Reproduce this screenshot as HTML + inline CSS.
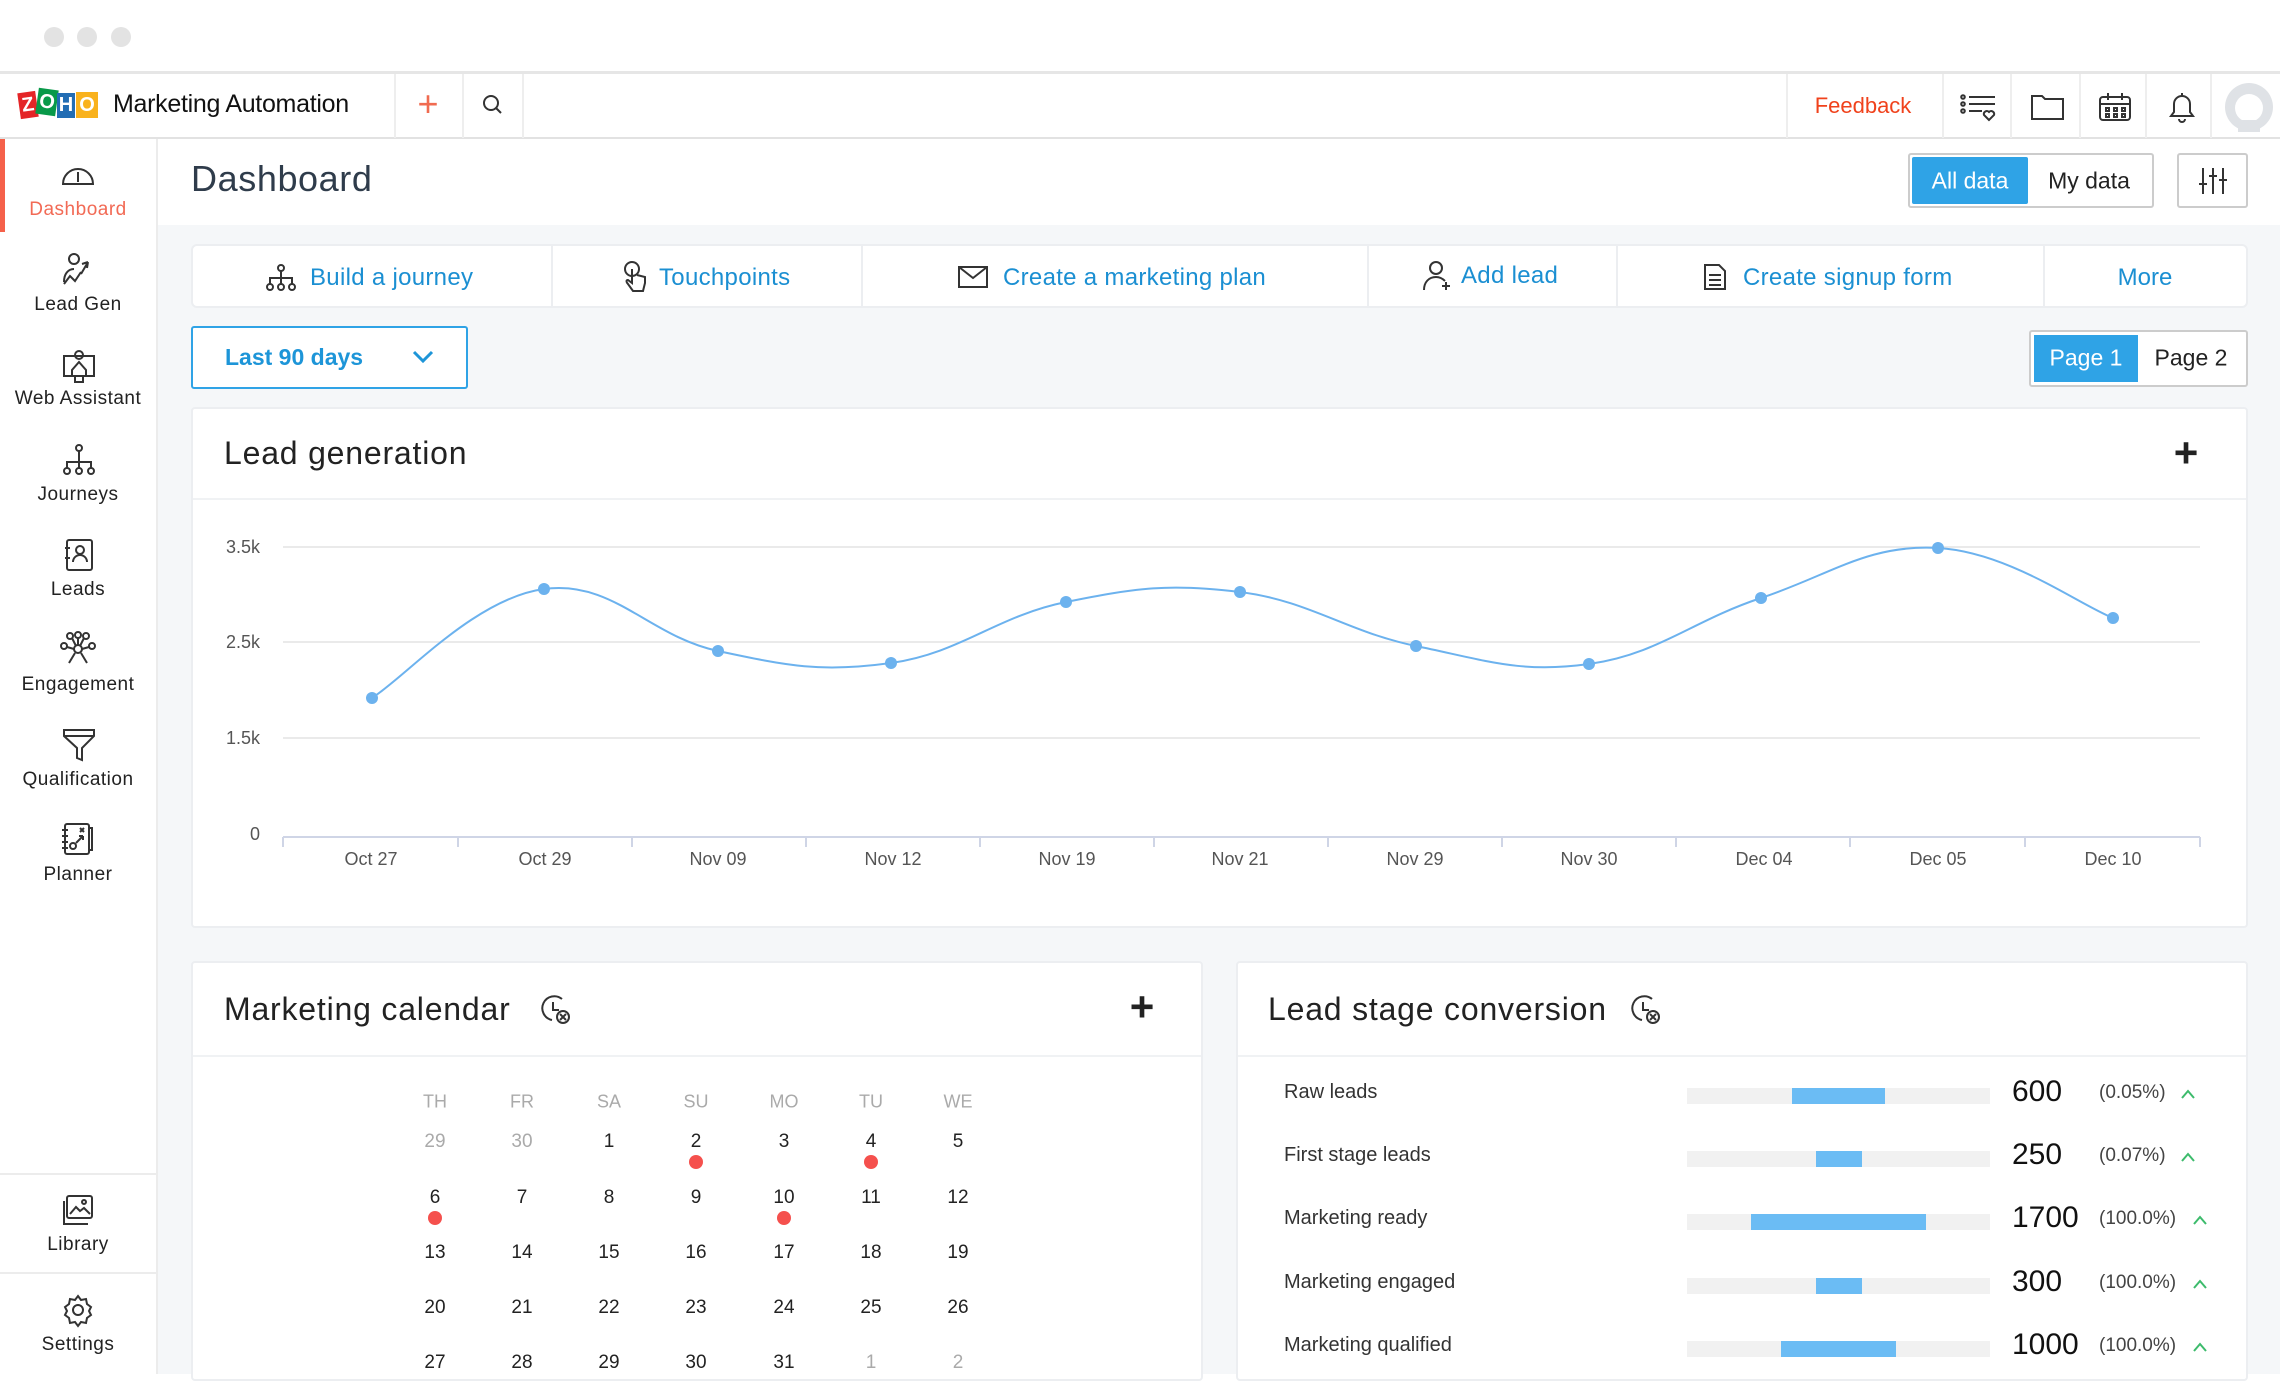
<!DOCTYPE html>
<html><head><meta charset="utf-8"><style>
*{box-sizing:border-box;margin:0;padding:0}
body{width:2280px;height:1374px;overflow:hidden;background:#fff;font-family:"Liberation Sans",sans-serif;position:relative;color:#222}
.a{position:absolute}
.c{position:absolute;transform:translate(-50%,-50%);white-space:nowrap}
.sb{font-size:19px;color:#222;letter-spacing:.5px;font-weight:500}
.blue{color:#1b8fd2}
svg{position:absolute;overflow:visible}
.ic{fill:none;stroke:#333;stroke-width:2}
.ttl{font-size:32px;color:#222;letter-spacing:.8px}
</style></head><body>
<!-- window chrome -->
<div class="a" style="left:0;top:0;width:2280px;height:74px;background:#fff;border-bottom:3px solid #e6e6e6"></div>
<div class="a" style="left:44px;top:27px;width:20px;height:20px;border-radius:50%;background:#e3e3e3"></div>
<div class="a" style="left:77px;top:27px;width:20px;height:20px;border-radius:50%;background:#e3e3e3"></div>
<div class="a" style="left:111px;top:27px;width:20px;height:20px;border-radius:50%;background:#e3e3e3"></div>
<!-- header -->
<div class="a" style="left:0;top:74px;width:2280px;height:65px;background:#fff;border-bottom:2px solid #e2e2e2"></div>
<div class="a" style="left:19px;top:92px;width:18px;height:26px;background:#e42527;transform:rotate(-8deg);color:#fff;font-weight:bold;font-size:20px;text-align:center;line-height:26px">Z</div>
<div class="a" style="left:37px;top:89px;width:20px;height:26px;background:#089949;transform:rotate(8deg);color:#fff;font-weight:bold;font-size:20px;text-align:center;line-height:26px">O</div>
<div class="a" style="left:57px;top:93px;width:18px;height:25px;background:#226db4;color:#fff;font-weight:bold;font-size:20px;text-align:center;line-height:25px">H</div>
<div class="a" style="left:76px;top:92px;width:22px;height:26px;background:#f9b21d;color:#fff;font-weight:bold;font-size:20px;text-align:center;line-height:26px">O</div>
<div class="a" style="left:113px;top:90px;font-size:25px;color:#111;letter-spacing:-.3px">Marketing Automation</div>
<div class="a" style="left:394px;top:74px;width:2px;height:64px;background:#eee"></div>
<div class="a" style="left:462px;top:74px;width:2px;height:64px;background:#eee"></div>
<div class="a" style="left:522px;top:74px;width:2px;height:64px;background:#eee"></div>
<div class="c" style="left:428px;top:104px;font-size:36px;color:#f06b50;font-weight:300">+</div>
<svg style="left:482px;top:94px" width="24" height="24"><circle cx="9" cy="9" r="7" class="ic"/><line x1="14" y1="14" x2="19" y2="19" class="ic"/></svg>
<div class="a" style="left:1786px;top:74px;width:2px;height:64px;background:#eee"></div>
<div class="c" style="left:1863px;top:106px;font-size:22px;color:#f0421c">Feedback</div>
<div class="a" style="left:1942px;top:74px;width:2px;height:64px;background:#eee"></div>
<div class="a" style="left:2010px;top:74px;width:2px;height:64px;background:#eee"></div>
<div class="a" style="left:2079px;top:74px;width:2px;height:64px;background:#eee"></div>
<div class="a" style="left:2145px;top:74px;width:2px;height:64px;background:#eee"></div>
<div class="a" style="left:2210px;top:74px;width:2px;height:64px;background:#eee"></div>
<svg style="left:1960px;top:94px" width="38" height="28"><g class="ic" stroke-width="1.6"><circle cx="3" cy="3" r="1.8"/><circle cx="3" cy="10" r="1.8"/><circle cx="3" cy="17" r="1.8"/><line x1="9" y1="3" x2="35" y2="3"/><line x1="9" y1="10" x2="35" y2="10"/><line x1="9" y1="17" x2="22" y2="17"/><path d="M29 26l-5-5a3 3 0 0 1 5-3a3 3 0 0 1 5 3z"/></g></svg>
<svg style="left:2030px;top:92px" width="36" height="30"><path class="ic" d="M2 4h10l3 3h18v20H2z"/></svg>
<svg style="left:2098px;top:92px" width="34" height="30"><g class="ic"><rect x="2" y="5" width="30" height="23" rx="3"/><line x1="2" y1="12" x2="32" y2="12"/><line x1="10" y1="1" x2="10" y2="8"/><line x1="24" y1="1" x2="24" y2="8"/><rect x="8" y="16" width="3" height="3"/><rect x="16" y="16" width="3" height="3"/><rect x="24" y="16" width="3" height="3"/><rect x="16" y="22" width="3" height="3"/><rect x="24" y="22" width="3" height="3"/><rect x="8" y="22" width="3" height="3"/></g></svg>
<svg style="left:2167px;top:90px" width="30" height="34"><path class="ic" d="M4 26h22l-3-4V14a8 8 0 0 0-16 0v8zM12 29a3 3 0 0 0 6 0M15 3v3"/></svg>
<svg style="left:2224px;top:82px" width="50" height="50"><circle cx="25" cy="25" r="24" fill="#dfe2e6"/><circle cx="25" cy="26" r="14" fill="#fff"/><rect x="14" y="38" width="22" height="12" fill="#dfe2e6"/></svg>
<!-- sidebar -->
<div class="a" style="left:0;top:139px;width:158px;height:1235px;background:#fff;border-right:2px solid #ececec"></div>
<div class="a" style="left:0;top:139px;width:5px;height:93px;background:#f5614a"></div>
<svg style="left:60px;top:162px" width="36" height="24"><g class="ic" stroke="#f26a55"><path d="M3 22a15 15 0 0 1 30 0z"/><line x1="18" y1="10" x2="18" y2="20"/></g></svg>
<div class="c sb" style="left:78px;top:210px;color:#f26a55">Dashboard</div>
<svg style="left:60px;top:252px" width="36" height="36"><g class="ic" stroke-width="1.8"><circle cx="14" cy="7" r="5"/><path d="M4 30c0-8 4-13 10-13M4 32l6-8 5 5 6-9M28 10l-6 2m6-2l-1 6M28 10l-7 12"/></g></svg>
<div class="c sb" style="left:78px;top:305px">Lead Gen</div>
<svg style="left:62px;top:348px" width="34" height="36"><g class="ic" stroke-width="1.8"><rect x="2" y="8" width="30" height="20"/><circle cx="17" cy="7" r="4"/><path d="M10 28v-6l7-8 7 8v6M13 28v6h8v-6"/></g></svg>
<div class="c sb" style="left:78px;top:399px">Web Assistant</div>
<svg style="left:62px;top:444px" width="34" height="32"><g class="ic" stroke-width="1.8"><circle cx="17" cy="4" r="3"/><line x1="17" y1="7" x2="17" y2="24"/><path d="M5 24v-6h24v6"/><circle cx="5" cy="27" r="3"/><circle cx="17" cy="27" r="3"/><circle cx="29" cy="27" r="3"/></g></svg>
<div class="c sb" style="left:78px;top:495px">Journeys</div>
<svg style="left:64px;top:538px" width="30" height="34"><g class="ic" stroke-width="1.8"><rect x="3" y="2" width="25" height="30" rx="2"/><circle cx="16" cy="12" r="4"/><path d="M9 24a7 7 0 0 1 14 0M1 10h5M1 20h5"/></g></svg>
<div class="c sb" style="left:78px;top:590px">Leads</div>
<svg style="left:60px;top:632px" width="36" height="34"><g class="ic" stroke-width="1.8"><circle cx="18" cy="17" r="4"/><circle cx="10" cy="4" r="3"/><circle cx="26" cy="4" r="3"/><circle cx="18" cy="3" r="3"/><circle cx="4" cy="14" r="3"/><circle cx="32" cy="14" r="3"/><path d="M12 6l4 8M24 6l-4 8M18 6v7M7 15l7 2M29 15l-7 2M15 21l-6 10M21 21l6 10"/></g></svg>
<div class="c sb" style="left:78px;top:685px">Engagement</div>
<svg style="left:62px;top:728px" width="34" height="34"><g class="ic" stroke-width="1.8"><path d="M2 2h30v6L20 20v12l-5-2V20L2 8z"/><line x1="2" y1="8" x2="32" y2="8"/></g></svg>
<div class="c sb" style="left:78px;top:780px">Qualification</div>
<svg style="left:62px;top:822px" width="32" height="36"><g class="ic" stroke-width="1.8"><rect x="3" y="2" width="24" height="30" rx="2"/><path d="M0 8h6M0 14h6M0 20h6M0 26h6M27 6h3v22h-3"/><circle cx="11" cy="24" r="3"/><path d="M14 21l7-7m0 0h-4m4 0v4M18 6l4 4m0-4l-4 4"/></g></svg>
<div class="c sb" style="left:78px;top:875px">Planner</div>
<div class="a" style="left:0;top:1173px;width:157px;height:2px;background:#ececec"></div>
<svg style="left:62px;top:1194px" width="32" height="32"><g class="ic" stroke-width="1.8"><rect x="5" y="2" width="25" height="22" rx="2"/><path d="M2 7v23h24"/><path d="M8 20l6-7 4 4 4-3 6 6"/><circle cx="22" cy="8" r="2"/></g></svg>
<div class="c sb" style="left:78px;top:1245px">Library</div>
<div class="a" style="left:0;top:1272px;width:157px;height:2px;background:#ececec"></div>
<svg style="left:62px;top:1294px" width="32" height="32"><g class="ic" stroke-width="1.8"><circle cx="16" cy="16" r="5"/><path d="M16 2l3 4 5-1 1 5 4 3-2 4 2 4-4 3-1 5-5-1-3 4-3-4-5 1-1-5-4-3 2-4-2-4 4-3 1-5 5 1z"/></g></svg>
<div class="c sb" style="left:78px;top:1345px">Settings</div>
<!-- main -->
<div class="a" style="left:158px;top:225px;width:2122px;height:1149px;background:#f5f7f9"></div>
<div class="a" style="left:191px;top:158px;font-size:36px;color:#2f3c4b;letter-spacing:.6px">Dashboard</div>
<div class="a" style="left:1908px;top:153px;width:246px;height:55px;border:2px solid #ccc;border-radius:3px;background:#fff"></div>
<div class="a" style="left:1912px;top:157px;width:116px;height:47px;background:#2fa3e6;border-radius:2px"></div>
<div class="c" style="left:1970px;top:181px;font-size:23px;color:#fff">All data</div>
<div class="c" style="left:2089px;top:181px;font-size:23px;color:#222">My data</div>
<div class="a" style="left:2177px;top:153px;width:71px;height:55px;border:2px solid #ccc;border-radius:3px;background:#fff"></div>
<svg style="left:2199px;top:166px" width="28" height="30"><g class="ic" stroke-width="2"><line x1="4" y1="2" x2="4" y2="28"/><line x1="14" y1="2" x2="14" y2="28"/><line x1="24" y1="2" x2="24" y2="28"/><line x1="0" y1="18" x2="8" y2="18"/><line x1="10" y1="10" x2="18" y2="10"/><line x1="20" y1="14" x2="28" y2="14"/></g></svg>
<!-- quick actions -->
<div class="a" style="left:191px;top:244px;width:2057px;height:64px;background:#fff;border:2px solid #eceef1;border-radius:6px"></div>
<div class="a" style="left:551px;top:245px;width:2px;height:62px;background:#eceef1"></div>
<div class="a" style="left:861px;top:245px;width:2px;height:62px;background:#eceef1"></div>
<div class="a" style="left:1367px;top:245px;width:2px;height:62px;background:#eceef1"></div>
<div class="a" style="left:1616px;top:245px;width:2px;height:62px;background:#eceef1"></div>
<div class="a" style="left:2043px;top:245px;width:2px;height:62px;background:#eceef1"></div>
<svg style="left:266px;top:264px" width="30" height="28"><g class="ic" stroke-width="1.6"><circle cx="15" cy="4" r="3"/><line x1="15" y1="7" x2="15" y2="20"/><path d="M4 20v-6h22v6"/><circle cx="4" cy="23" r="3"/><circle cx="15" cy="23" r="3"/><circle cx="26" cy="23" r="3"/></g></svg>
<div class="a blue" style="left:310px;top:264px;font-size:24px;letter-spacing:.3px">Build a journey</div>
<svg style="left:622px;top:260px" width="26" height="34"><g class="ic" stroke-width="1.6"><circle cx="10" cy="9" r="7"/><path d="M10 9v14l-4-3c-2 0-2 2 0 4l5 7h10l2-8v-6l-8-2"/></g></svg>
<div class="a blue" style="left:659px;top:264px;font-size:24px;letter-spacing:.3px">Touchpoints</div>
<svg style="left:958px;top:266px" width="30" height="22"><g class="ic" stroke-width="1.8"><rect x="1" y="1" width="28" height="20"/><path d="M1 1l14 11 14-11"/></g></svg>
<div class="a blue" style="left:1003px;top:264px;font-size:24px;letter-spacing:.3px">Create a marketing plan</div>
<svg style="left:1422px;top:260px" width="30" height="32"><g class="ic" stroke-width="1.6"><circle cx="14" cy="8" r="6"/><path d="M2 30c0-8 5-13 12-13 4 0 7 2 9 4M24 22v8M20 26h8"/></g></svg>
<div class="a blue" style="left:1461px;top:262px;font-size:24px;letter-spacing:.3px">Add lead</div>
<svg style="left:1703px;top:263px" width="24" height="28"><g class="ic" stroke-width="1.6"><path d="M2 2h14l6 6v18H2z"/><path d="M6 12h12M6 17h12M6 22h12"/></g></svg>
<div class="a blue" style="left:1743px;top:264px;font-size:24px;letter-spacing:.3px">Create signup form</div>
<div class="c blue" style="left:2145px;top:278px;font-size:24px">More</div>
<!-- dropdown -->
<div class="a" style="left:191px;top:326px;width:277px;height:63px;border:2px solid #2fa3e6;border-radius:3px;background:#fff"></div>
<div class="a" style="left:225px;top:344px;font-size:23px;color:#1d95d8;font-weight:bold">Last 90 days</div>
<svg style="left:412px;top:350px" width="22" height="14"><path d="M2 2l9 9 9-9" fill="none" stroke="#1d95d8" stroke-width="3"/></svg>
<!-- page toggle -->
<div class="a" style="left:2029px;top:330px;width:219px;height:57px;border:2px solid #ccc;border-radius:3px;background:#fff"></div>
<div class="a" style="left:2034px;top:335px;width:104px;height:47px;background:#2fa3e6"></div>
<div class="c" style="left:2086px;top:358px;font-size:23px;color:#fff">Page 1</div>
<div class="c" style="left:2191px;top:358px;font-size:23px;color:#222">Page 2</div>
<!-- lead gen card -->
<div class="a" style="left:191px;top:407px;width:2057px;height:521px;background:#fff;border:2px solid #eceef1;border-radius:4px"></div>
<div class="a" style="left:193px;top:498px;width:2053px;height:2px;background:#f0f2f4"></div>
<div class="a ttl" style="left:224px;top:435px">Lead generation</div>
<div class="c" style="left:2186px;top:453px;font-size:42px;color:#222;font-weight:bold">+</div>
<svg style="left:0;top:0" width="2280" height="1374" id="ch">
<g stroke="#e4e4e4" stroke-width="1.5"><line x1="283" y1="547" x2="2200" y2="547"/><line x1="283" y1="642" x2="2200" y2="642"/><line x1="283" y1="738" x2="2200" y2="738"/></g>
<line x1="283" y1="837" x2="2200" y2="837" stroke="#cfd5e6" stroke-width="2"/>
<g stroke="#cfd5e6" stroke-width="2"><line x1="283" y1="837" x2="283" y2="847"/><line x1="458" y1="837" x2="458" y2="847"/><line x1="632" y1="837" x2="632" y2="847"/><line x1="806" y1="837" x2="806" y2="847"/><line x1="980" y1="837" x2="980" y2="847"/><line x1="1154" y1="837" x2="1154" y2="847"/><line x1="1328" y1="837" x2="1328" y2="847"/><line x1="1502" y1="837" x2="1502" y2="847"/><line x1="1676" y1="837" x2="1676" y2="847"/><line x1="1850" y1="837" x2="1850" y2="847"/><line x1="2025" y1="837" x2="2025" y2="847"/><line x1="2200" y1="837" x2="2200" y2="847"/></g>
<g font-family="Liberation Sans" font-size="18" fill="#555" text-anchor="end"><text x="260" y="553">3.5k</text><text x="260" y="648">2.5k</text><text x="260" y="744">1.5k</text><text x="260" y="840">0</text></g>
<g font-family="Liberation Sans" font-size="18" fill="#555" text-anchor="middle"><text x="371" y="865">Oct 27</text><text x="545" y="865">Oct 29</text><text x="718" y="865">Nov 09</text><text x="893" y="865">Nov 12</text><text x="1067" y="865">Nov 19</text><text x="1240" y="865">Nov 21</text><text x="1415" y="865">Nov 29</text><text x="1589" y="865">Nov 30</text><text x="1764" y="865">Dec 04</text><text x="1938" y="865">Dec 05</text><text x="2113" y="865">Dec 10</text></g>
<path id="ln" fill="none" stroke="#6cb2ee" stroke-width="2"/>
<g id="pts" fill="#6cb2ee"></g>
</svg>
<!-- calendar card -->
<div class="a" style="left:191px;top:961px;width:1012px;height:420px;background:#fff;border:2px solid #eceef1;border-radius:4px"></div>
<div class="a" style="left:193px;top:1055px;width:1008px;height:2px;background:#f0f2f4"></div>
<div class="a ttl" style="left:224px;top:991px">Marketing calendar</div>
<svg style="left:540px;top:994px" width="32" height="32"><g class="ic" stroke-width="1.8"><path d="M22 5A12 12 0 1 0 12 26"/><path d="M13 8v8h6"/><circle cx="23" cy="23" r="6"/><path d="M20 20l6 6M26 20l-6 6"/></g></svg>
<div class="c" style="left:1142px;top:1007px;font-size:42px;color:#222;font-weight:bold">+</div>
<div id="cal"></div>
<!-- lead stage card -->
<div class="a" style="left:1236px;top:961px;width:1012px;height:420px;background:#fff;border:2px solid #eceef1;border-radius:4px"></div>
<div class="a" style="left:1238px;top:1055px;width:1008px;height:2px;background:#f0f2f4"></div>
<div class="a ttl" style="left:1268px;top:991px">Lead stage conversion</div>
<svg style="left:1630px;top:994px" width="32" height="32"><g class="ic" stroke-width="1.8"><path d="M22 5A12 12 0 1 0 12 26"/><path d="M13 8v8h6"/><circle cx="23" cy="23" r="6"/><path d="M20 20l6 6M26 20l-6 6"/></g></svg>
<div id="ls"></div>
<script>
var P=[[372,698],[544,589],[718,651],[891,663],[1066,602],[1240,592],[1416,646],[1589,664],[1761,598],[1938,548],[2113,618]];
var d="M"+P[0][0]+" "+P[0][1];
for(var i=0;i<P.length-1;i++){var p0=P[i-1]||P[i],p1=P[i],p2=P[i+1],p3=P[i+2]||p2;var t=1/5;
d+=" C"+(p1[0]+(p2[0]-p0[0])*t)+" "+(p1[1]+(p2[1]-p0[1])*t)+" "+(p2[0]-(p3[0]-p1[0])*t)+" "+(p2[1]-(p3[1]-p1[1])*t)+" "+p2[0]+" "+p2[1];}
d=d.replace("C372 698","C380 600");
document.getElementById("ln").setAttribute("d",d);
var g="";P.forEach(function(p){g+='<circle cx="'+p[0]+'" cy="'+p[1]+'" r="6"/>'});document.getElementById("pts").innerHTML=g;
var xs=[435,522,609,696,784,871,958],h="";
["TH","FR","SA","SU","MO","TU","WE"].forEach(function(s,i){h+='<div class="c" style="left:'+xs[i]+'px;top:1102px;font-size:18px;color:#aaa">'+s+'</div>'});
var rows=[[29,30,1,2,3,4,5],[6,7,8,9,10,11,12],[13,14,15,16,17,18,19],[20,21,22,23,24,25,26],[27,28,29,30,31,1,2]],ys=[1142,1198,1253,1308,1363];
rows.forEach(function(r,ri){r.forEach(function(n,ci){var gr=(ri==0&&ci<2)||(ri==4&&ci>4);h+='<div class="c" style="left:'+xs[ci]+'px;top:'+ys[ri]+'px;font-size:19px;color:'+(gr?'#aaa':'#222')+'">'+n+'</div>'})});
[[0,3],[0,5],[1,0],[1,4]].forEach(function(q){h+='<div class="a" style="left:'+(xs[q[1]]-7)+'px;top:'+(ys[q[0]]+13)+'px;width:14px;height:14px;border-radius:50%;background:#f5504d"></div>'});
document.getElementById("cal").innerHTML=h;
var L=[["Raw leads",1792,1885,"600","(0.05%)"],["First stage leads",1816,1862,"250","(0.07%)"],["Marketing ready",1751,1926,"1700","(100.0%)"],["Marketing engaged",1816,1862,"300","(100.0%)"],["Marketing qualified",1781,1896,"1000","(100.0%)"]],Y=[1093,1156,1219,1283,1346],s="";
L.forEach(function(l,i){var y=Y[i];
s+='<div class="a" style="left:1284px;top:'+(y-12)+'px;font-size:20px;color:#333">'+l[0]+'</div>';
s+='<div class="a" style="left:1687px;top:'+(y-5)+'px;width:303px;height:16px;background:#f1f1f1"></div>';
s+='<div class="a" style="left:'+l[1]+'px;top:'+(y-5)+'px;width:'+(l[2]-l[1])+'px;height:16px;background:#6bbcf4"></div>';
s+='<div class="a" style="left:2012px;top:'+(y-18)+'px;font-size:30px;color:#111">'+l[3]+'</div>';
s+='<div class="a" style="left:2099px;top:'+(y-11)+'px;font-size:19px;color:#444">'+l[4]+'</div>';
s+='<svg style="left:'+(l[4].length>7?2192:2180)+'px;top:'+(y-5)+'px" width="16" height="12"><path d="M2 10l6-7 6 7" fill="none" stroke="#3dbb6c" stroke-width="2"/></svg>';});
document.getElementById("ls").innerHTML=s;
</script>
</body></html>
